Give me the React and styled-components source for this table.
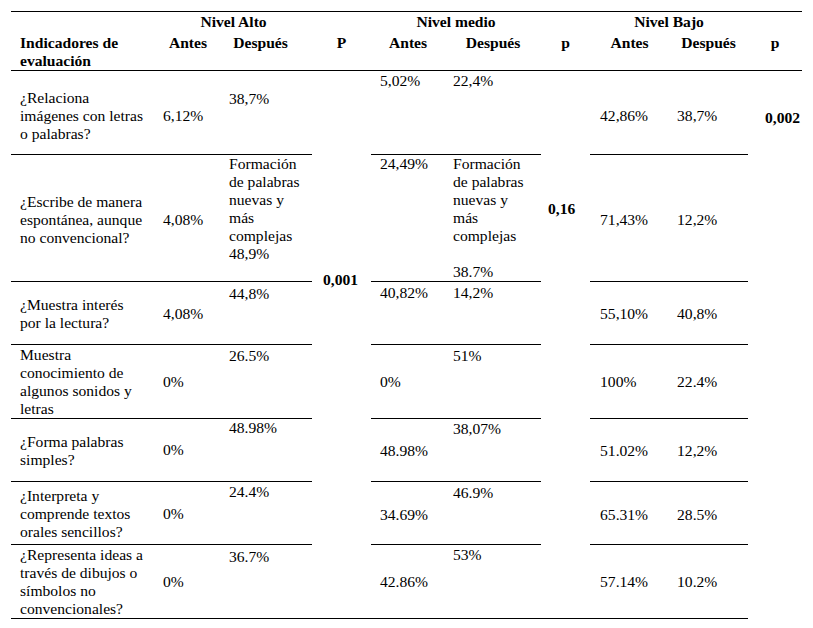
import React from "react";
import styled, { createGlobalStyle } from "styled-components";

const serif = `"Liberation Serif", "Times New Roman", Times, serif`;

const GlobalStyle = createGlobalStyle`
	html, body {
		margin: 0;
		padding: 0;
		background: #fff;
	}
	body {
		font-family: ${serif};
		color: #000;
	}
`;

const Page = styled.div`
	padding: 11px 0 0 11px;
`;

const Table = styled.table`
	border-collapse: collapse;
	table-layout: fixed;
	width: 791px;
	font-family: ${serif};
	font-size: 15.6px;
	line-height: 18px;
	color: #000;
`;

const Col = styled.col`
	width: ${props => props.$w}px;
`;

const Row = styled.tr`
	height: ${props => props.$h}px;
`;

const Head = styled.th`
	font-family: ${serif};
	font-size: 15.6px;
	line-height: 18px;
	font-weight: bold;
	text-align: ${props => props.$align || "center"};
	vertical-align: top;
	padding: ${props => props.$pt || 0}px ${props => props.$pr ?? 8}px 0
		${props => props.$pl ?? 8}px;
	border-top: ${props => (props.$topRule ? "1px solid #000" : "none")};
	border-bottom: ${props => (props.$rule ? "1px solid #000" : "none")};
`;

const Cell = styled.td`
	font-family: ${serif};
	font-size: 15.6px;
	line-height: 18px;
	font-weight: normal;
	text-align: left;
	vertical-align: top;
	padding: ${props => props.$top}px 8px 0 ${props => props.$pl ?? 8}px;
	border-bottom: 1px solid #000;
`;

const PValue = styled.td`
	font-family: ${serif};
	font-size: 15.6px;
	line-height: 18px;
	font-weight: bold;
	text-align: left;
	vertical-align: top;
	padding: ${props => props.$top}px 0 0 ${props => props.$left}px;
	border-bottom: ${props => (props.$open ? "none" : "1px solid #000")};
`;

const widths = [144, 66, 91, 59, 74, 96, 49, 79, 79, 54];

const formacion = "Formación de palabras nuevas y más complejas";

// each cell: [text, top padding]
const rows = [
	{
		h: 84,
		ind: ["¿Relaciona imágenes con letras o palabras?", 18],
		alto: [["6,12%", 36], ["38,7%", 19]],
		medio: [["5,02%", 1], ["22,4%", 1]],
		bajo: [["42,86%", 36], ["38,7%", 36]],
	},
	{
		h: 127,
		ind: ["¿Escribe de manera espontánea, aunque no convencional?", 38],
		alto: [
			["4,08%", 56],
			[
				<>
					{formacion}
					<br />
					48,9%
				</>,
				0,
			],
		],
		medio: [
			["24,49%", 0],
			[
				<>
					{formacion}
					<br />
					<br />
					38.7%
				</>,
				0,
			],
		],
		bajo: [["71,43%", 56], ["12,2%", 56]],
	},
	{
		h: 63,
		ind: ["¿Muestra interés por la lectura?", 14],
		alto: [["4,08%", 23], ["44,8%", 3]],
		medio: [["40,82%", 2], ["14,2%", 2]],
		bajo: [["55,10%", 23], ["40,8%", 23]],
	},
	{
		h: 74,
		ind: ["Muestra conocimiento de algunos sonidos y letras", 1],
		alto: [["0%", 28], ["26.5%", 2]],
		medio: [["0%", 28], ["51%", 2]],
		bajo: [["100%", 28], ["22.4%", 28]],
	},
	{
		h: 63,
		ind: ["¿Forma palabras simples?", 14],
		alto: [["0%", 22], ["48.98%", 0]],
		medio: [["48.98%", 23], ["38,07%", 1]],
		bajo: [["51.02%", 23], ["12,2%", 23]],
	},
	{
		h: 63,
		ind: ["¿Interpreta y comprende textos orales sencillos?", 5],
		alto: [["0%", 23], ["24.4%", 1]],
		medio: [["34.69%", 24], ["46.9%", 2]],
		bajo: [["65.31%", 24], ["28.5%", 24]],
	},
	{
		h: 73,
		ind: ["¿Representa ideas a través de dibujos o símbolos no convencionales?", 1],
		alto: [["0%", 28], ["36.7%", 3]],
		medio: [["42.86%", 28], ["53%", 1]],
		bajo: [["57.14%", 28], ["10.2%", 28]],
	},
];

const App = () => {
	return (
		<Page>
			<GlobalStyle />
			<Table>
				<colgroup>
					{widths.map((w, i) => (
						<Col key={i} $w={w} />
					))}
				</colgroup>
				<thead>
					<Row $h={19}>
						<Head $topRule $pt={1} />
						<Head $topRule $pt={1} colSpan={2}>
							Nivel Alto
						</Head>
						<Head $topRule $pt={1} />
						<Head $topRule $pt={1} colSpan={2}>
							Nivel medio
						</Head>
						<Head $topRule $pt={1} />
						<Head $topRule $pt={1} colSpan={2}>
							Nivel Bajo
						</Head>
						<Head $topRule $pt={1} />
					</Row>
					<Row $h={39}>
						<Head $rule $pt={3} $align="left" $pl={9}>
							Indicadores de evaluación
						</Head>
						<Head $rule $pt={3}>Antes</Head>
						<Head $rule $pt={3} $pr={20}>
							Después
						</Head>
						<Head $rule $pt={3}>P</Head>
						<Head $rule $pt={3}>Antes</Head>
						<Head $rule $pt={3}>Después</Head>
						<Head $rule $pt={3}>p</Head>
						<Head $rule $pt={3}>Antes</Head>
						<Head $rule $pt={3}>Después</Head>
						<Head $rule $pt={3}>p</Head>
					</Row>
				</thead>
				<tbody>
					{rows.map((r, i) => (
						<Row key={i} $h={r.h}>
							<Cell $pl={9} $top={r.ind[1]}>
								{r.ind[0]}
							</Cell>
							<Cell $top={r.alto[0][1]}>{r.alto[0][0]}</Cell>
							<Cell $top={r.alto[1][1]}>{r.alto[1][0]}</Cell>
							{i === 0 && (
								<PValue rowSpan={7} $top={200} $left={11}>
									0,001
								</PValue>
							)}
							<Cell $pl={9} $top={r.medio[0][1]}>
								{r.medio[0][0]}
							</Cell>
							<Cell $top={r.medio[1][1]}>{r.medio[1][0]}</Cell>
							{i === 0 && (
								<PValue rowSpan={7} $top={129} $left={7}>
									0,16
								</PValue>
							)}
							<Cell $pl={10} $top={r.bajo[0][1]}>
								{r.bajo[0][0]}
							</Cell>
							<Cell $top={r.bajo[1][1]}>{r.bajo[1][0]}</Cell>
							{i === 0 && (
								<PValue rowSpan={7} $top={38} $left={17} $open>
									0,002
								</PValue>
							)}
						</Row>
					))}
				</tbody>
			</Table>
		</Page>
	);
};

export default App;
